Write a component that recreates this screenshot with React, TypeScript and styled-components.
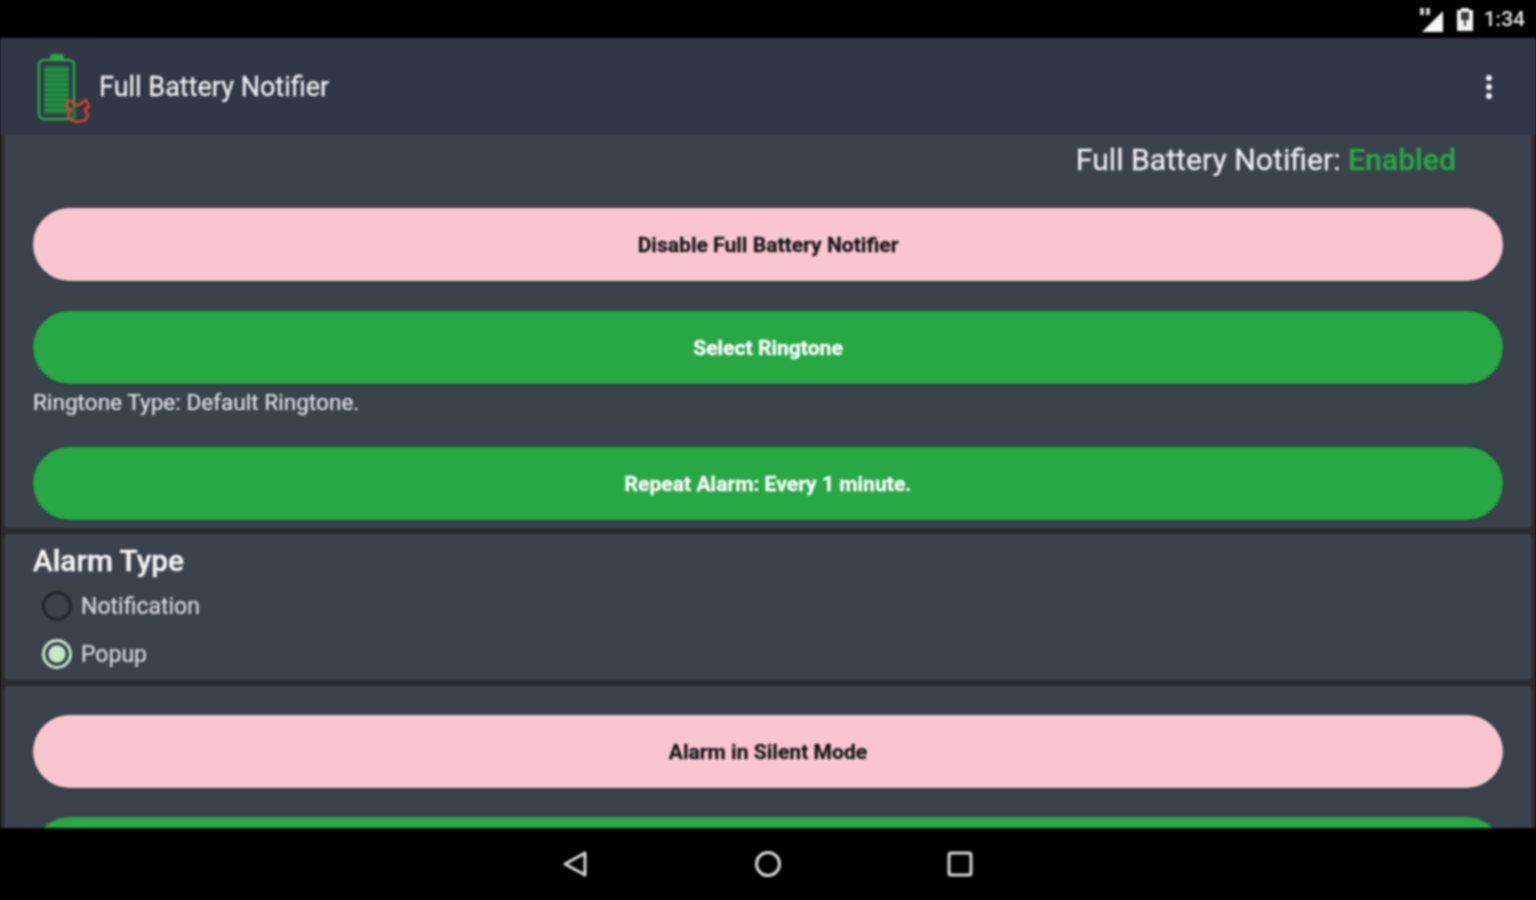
import React from 'react';
import styled, { createGlobalStyle } from 'styled-components';

const GlobalStyle = createGlobalStyle`
  html, body {
    margin: 0;
    padding: 0;
    background: #000;
    font-family: Roboto, "Liberation Sans", sans-serif;
  }
  * {
    box-sizing: border-box;
  }
`;

const App: React.FC = () => {
  return (
    <Screen>
      <GlobalStyle />
      <StatusBar>
        <SignalIcon />
        <BatteryIcon />
        <Clock>1:34</Clock>
      </StatusBar>

      <AppBar>
        <BatteryLogo />
        <AppTitle>Full Battery Notifier</AppTitle>
        <OverflowMenu>
          <Dot />
          <Dot />
          <Dot />
        </OverflowMenu>
      </AppBar>

      <Content>
        <TopCard>
          <StatusLine>
            Full Battery Notifier: <Enabled>Enabled</Enabled>
          </StatusLine>
          <PillButton $variant="pink">Disable Full Battery Notifier</PillButton>
          <PillButton $variant="green" $top={30}>Select Ringtone</PillButton>
          <Caption>Ringtone Type: Default Ringtone.</Caption>
          <PillButton $variant="green" $top={28}>Repeat Alarm: Every 1 minute.</PillButton>
        </TopCard>

        <AlarmCard>
          <SectionTitle>Alarm Type</SectionTitle>
          <RadioRow>
            <Radio />
            <RadioLabel>Notification</RadioLabel>
          </RadioRow>
          <RadioRow>
            <Radio $checked />
            <RadioLabel>Popup</RadioLabel>
          </RadioRow>
        </AlarmCard>

        <BottomCard>
          <PillButton $variant="pink">Alarm in Silent Mode</PillButton>
          <PillButton $variant="green" $top={29} />
        </BottomCard>
      </Content>

      <NavBar>
        <NavIcon viewBox="0 0 28 28">
          <path d="M3 14 L23 3 V25 Z" fill="none" stroke="#d8d8d8" strokeWidth="3" strokeLinejoin="round" />
        </NavIcon>
        <NavIcon viewBox="0 0 28 28">
          <circle cx="14" cy="14" r="11.5" fill="none" stroke="#d8d8d8" strokeWidth="3" />
        </NavIcon>
        <NavIcon viewBox="0 0 28 28">
          <rect x="3" y="3" width="22" height="22" rx="2" fill="none" stroke="#d8d8d8" strokeWidth="3" />
        </NavIcon>
      </NavBar>
    </Screen>
  );
};

const SignalIcon = () => (
  <StatusSvg width="28" height="28" viewBox="0 0 28 28">
    <path d="M25 6 V27 H4 Z" fill="#f6f6f6" />
    <path d="M2 3 h4 v7 h-4z M8 3 h4 v7 h-4z" fill="#cfcfcf" />
  </StatusSvg>
);

const BatteryIcon = () => (
  <StatusSvg width="20" height="24" viewBox="0 0 20 24">
    <path d="M6 1 h8 v2 h4 v21 h-16 v-21 h4z" fill="#f2f2f2" />
    <path d="M6 5 h8 v8 h-8z" fill="#3a3a3a" />
    <path d="M10 13 v6" stroke="#3a3a3a" strokeWidth="2" />
  </StatusSvg>
);

const BatteryLogo = () => (
  <LogoSvg width="56" height="72" viewBox="0 0 56 72">
    <rect x="14" y="3" width="14" height="7" rx="3" fill="#28a745" />
    <rect x="3" y="9" width="35" height="59" rx="5" fill="none" stroke="#28a745" strokeWidth="2.5" />
    <rect x="8" y="15" width="25" height="48" fill="#1f7a3c" />
    {[18, 23, 28, 33, 38, 43, 48, 53, 58].map(y => (
      <rect key={y} x="8" y={y} width="25" height="1.5" fill="#2b9a4b" />
    ))}
    <path
      d="M30 55 l3 -6 l4 2 l2 3 l5 0 l2 -3 l4 -2 l3 6 l-4 4 l3 6 l-3 4 l-7 2 l-7 -2 l-3 -4 l3 -6 z"
      fill="none"
      stroke="#d9432f"
      strokeWidth="2.5"
      strokeLinejoin="round"
    />
    <path d="M38 57 v11" stroke="#1f7a3c" strokeWidth="4" />
  </LogoSvg>
);

const Screen = styled.div`
  width: 100%;
  height: 100vh;
  display: flex;
  flex-direction: column;
  overflow: hidden;
  background: #000;
  filter: blur(0.8px);
`;

const StatusBar = styled.div`
  height: 38px;
  flex: none;
  display: flex;
  align-items: center;
  justify-content: flex-end;
  padding-right: 11px;
  background: #000;
`;

const StatusSvg = styled.svg`
  margin-right: 9px;
  flex: none;
`;

const Clock = styled.span`
  font-size: 21px;
  font-weight: 500;
  color: #e6e6e6;
`;

const AppBar = styled.header`
  height: 97px;
  flex: none;
  display: flex;
  align-items: center;
  padding: 0 44px 0 36px;
  background: #303846;
`;

const LogoSvg = styled.svg`
  flex: none;
  margin-right: 7px;
`;

const AppTitle = styled.h1`
  margin: 0;
  flex: 1;
  font-size: 27px;
  font-weight: 400;
  color: #eceef0;
  -webkit-text-stroke: 0.3px #eceef0;
`;

const OverflowMenu = styled.div`
  display: flex;
  flex-direction: column;
  gap: 3px;
`;

const Dot = styled.span`
  width: 6px;
  height: 6px;
  border-radius: 50%;
  background: #eef0f4;
`;

const Content = styled.main`
  flex: 1;
  min-height: 0;
  overflow: hidden;
  display: flex;
  flex-direction: column;
  gap: 6px;
  padding: 0 4px;
  background: #2a2a2b;
`;

const Card = styled.section`
  flex: none;
  padding: 0 29px;
  background: #3a424c;
  border-radius: 4px;
`;

const TopCard = styled(Card)`
  height: 393px;
  border-radius: 0 0 4px 4px;
`;

const AlarmCard = styled(Card)`
  height: 146px;
  padding-top: 9px;
`;

const BottomCard = styled(Card)`
  height: 200px;
  padding-top: 29px;
`;

const StatusLine = styled.div`
  height: 73px;
  padding: 6px 47px 0 0;
  text-align: right;
  font-size: 30.2px;
  line-height: 38px;
  color: #eceef0;
  -webkit-text-stroke: 0.3px #eceef0;
`;

const Enabled = styled.span`
  color: #28a745;
  font-weight: 500;
  -webkit-text-stroke: 0.3px #28a745;
`;

const PillButton = styled.div<{ $variant: 'pink' | 'green'; $top?: number }>`
  height: 73px;
  margin-top: ${p => p.$top ?? 0}px;
  display: flex;
  align-items: center;
  justify-content: center;
  border-radius: 37px;
  font-size: 21.1px;
  font-weight: 700;
  background: ${p => (p.$variant === 'pink' ? '#f9c6cf' : '#28a745')};
  color: ${p => (p.$variant === 'pink' ? '#17171a' : '#ffffff')};
  -webkit-text-stroke: 0.3px ${p => (p.$variant === 'pink' ? '#17171a' : '#ffffff')};
  box-shadow: 0 1px 2px rgba(20, 40, 40, 0.5);
`;

const Caption = styled.div`
  height: 32px;
  margin-top: 3px;
  font-size: 22.6px;
  line-height: 32px;
  color: #dfe2e5;
  -webkit-text-stroke: 0.2px #dfe2e5;
`;

const SectionTitle = styled.h2`
  margin: 0 0 3px;
  font-size: 29.8px;
  line-height: 36px;
  font-weight: 500;
  color: #f2f3f4;
  -webkit-text-stroke: 0.4px #f2f3f4;
`;

const RadioRow = styled.div`
  height: 48px;
  display: flex;
  align-items: center;
  padding-left: 9px;
`;

const Radio = styled.span<{ $checked?: boolean }>`
  width: 30px;
  height: 30px;
  flex: none;
  margin-right: 9px;
  border-radius: 50%;
  border: 3px solid ${p => (p.$checked ? '#c4e8c8' : '#20262e')};
  background: ${p => (p.$checked ? 'radial-gradient(circle, #c4e8c8 0 8px, #3a424c 9px)' : 'transparent')};
`;

const RadioLabel = styled.span`
  font-size: 23px;
  color: #d9dcdf;
  -webkit-text-stroke: 0.2px #d9dcdf;
`;

const NavBar = styled.nav`
  height: 72px;
  flex: none;
  display: flex;
  align-items: center;
  justify-content: center;
  gap: 164px;
  background: #000;
`;

const NavIcon = styled.svg`
  width: 28px;
  height: 28px;
`;

export default App;
